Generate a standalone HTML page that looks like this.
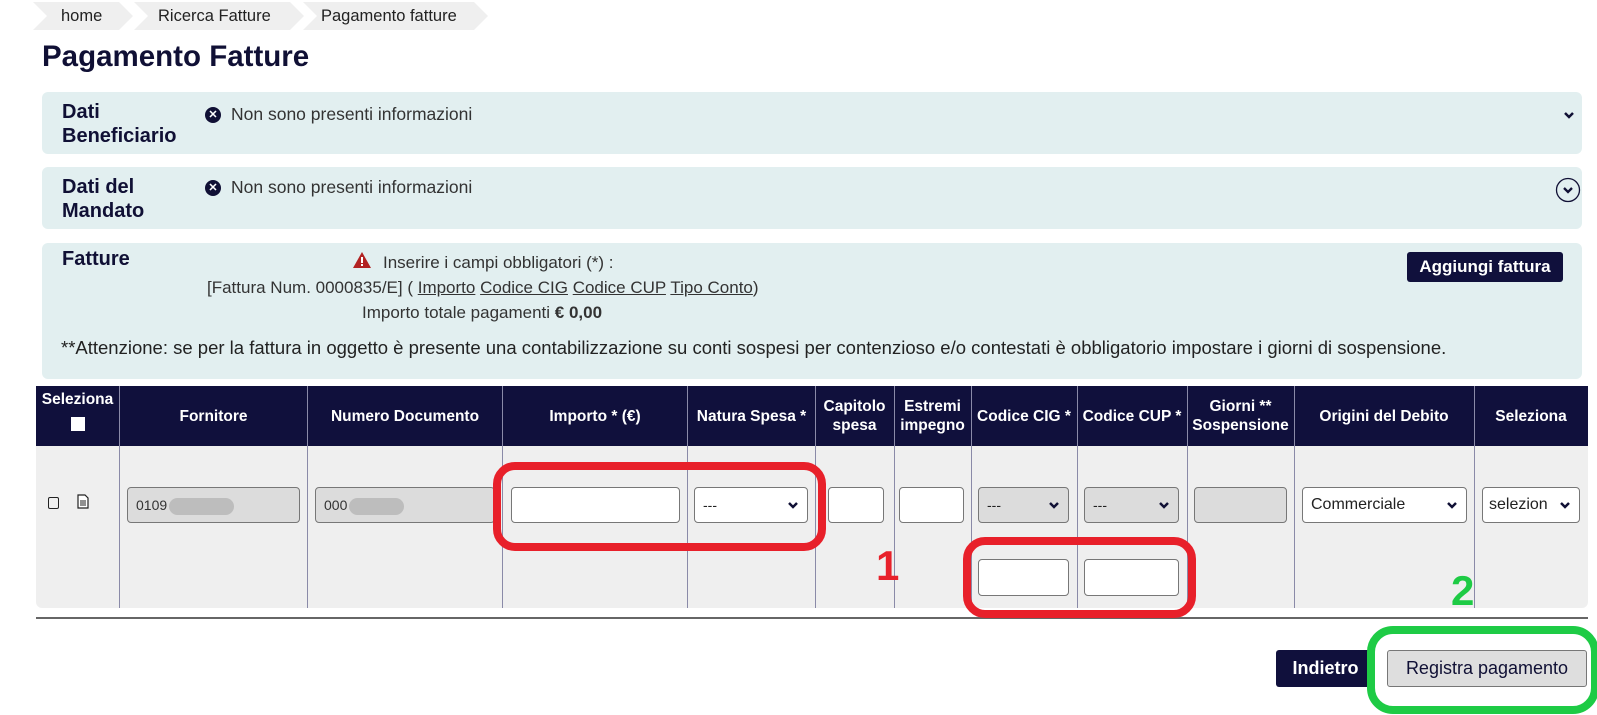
<!DOCTYPE html>
<html><head><meta charset="utf-8"><style>
*{box-sizing:border-box;margin:0;padding:0}
body{width:1597px;height:715px;background:#fff;position:relative;overflow:hidden;font-family:"Liberation Sans",sans-serif;color:#1a1a2e}
.a{position:absolute}
.bc{position:absolute;top:2px;height:28px;background:#efefef;font-size:16.5px;line-height:28px;color:#222;clip-path:polygon(0 0,calc(100% - 14px) 0,100% 50%,calc(100% - 14px) 100%,0 100%,14px 50%)}
.panel{position:absolute;left:42px;width:1540px;background:#e2eff0;border-radius:6px}
.pt{position:absolute;left:20px;font-weight:bold;font-size:20px;line-height:24px;color:#101035}
.info{position:absolute;left:163px;font-size:17.5px;color:#333;display:flex;align-items:center;gap:10px}
.xi{width:16px;height:16px;border-radius:50%;background:#101035;color:#fff;font-size:11px;line-height:16px;text-align:center;font-weight:bold}
.hd{position:absolute;top:386px;height:60px;background:#10103c;color:#fff;font-family:"Liberation Sans Narrow","Liberation Sans",sans-serif;font-weight:bold;font-size:15.5px;line-height:19px;display:flex;align-items:center;justify-content:center;text-align:center}
.vl{position:absolute;top:386px;height:222px;width:1px;background:#8a8aa8}
.in{position:absolute;background:#fff;border:1px solid #777;border-radius:4px;height:36px}
.dis{background:#dcdcdc}
.sel{font-size:14px;line-height:34px;padding-left:8px;color:#222}
.chev{position:absolute;right:7px;top:10px;width:14px;height:14px}
</style></head><body>
<div class="bc" style="left:33px;width:100px;padding-left:28px">home</div>
<div class="bc" style="left:134px;width:170px;padding-left:24px">Ricerca Fatture</div>
<div class="bc" style="left:303px;width:185px;padding-left:18px">Pagamento fatture</div>
<div class="a" style="left:42px;top:40px;font-size:29.5px;font-weight:bold;color:#101035">Pagamento Fatture</div>

<div class="panel" style="top:92px;height:62px">
<div class="pt" style="top:8px">Dati<br>Beneficiario</div>
<div class="info" style="top:12px"><span class="xi">✕</span>Non sono presenti informazioni</div>
<svg class="a" style="left:1521px;top:18px" width="12" height="10" viewBox="0 0 12 10"><path d="M2 3l4 4 4-4" stroke="#101035" stroke-width="2.5" fill="none"/></svg>
</div>
<div class="panel" style="top:167px;height:62px">
<div class="pt" style="top:8px">Dati del<br>Mandato</div>
<div class="info" style="top:10px"><span class="xi">✕</span>Non sono presenti informazioni</div>
<svg class="a" style="left:1513px;top:10px" width="26" height="26" viewBox="0 0 26 26"><circle cx="13" cy="13" r="11.5" stroke="#101035" stroke-width="1.3" fill="none"/><path d="M9 11l4 4 4-4" stroke="#101035" stroke-width="2.3" fill="none"/></svg>
</div>
<div class="panel" style="top:243px;height:136px;font-size:17px;color:#333">
<div class="pt" style="top:4px">Fatture</div>
<svg class="a" style="left:310px;top:8px" width="20" height="18" viewBox="0 0 20 18"><path d="M10 1L19 17H1Z" fill="#b22222"/><rect x="9" y="6" width="2" height="6" fill="#fff"/><rect x="9" y="13" width="2" height="2" fill="#fff"/></svg>
<div class="a" style="left:341px;top:10px">Inserire i campi obbligatori (*) :</div>
<div class="a" style="left:165px;top:35px">[Fattura Num. 0000835/E] ( <u>Importo</u> <u>Codice CIG</u> <u>Codice CUP</u> <u>Tipo Conto</u>)</div>
<div class="a" style="left:320px;top:60px">Importo totale pagamenti <b>€ 0,00</b></div>
<div class="a" style="left:19px;top:94px;font-size:18.5px;color:#222">**Attenzione: se per la fattura in oggetto è presente una contabilizzazione su conti sospesi per contenzioso e/o contestati è obbligatorio impostare i giorni di sospensione.</div>
<div class="a" style="left:1365px;top:9px;width:156px;height:30px;background:#10103c;color:#fff;border-radius:3px;font-weight:bold;font-size:17px;line-height:30px;text-align:center">Aggiungi fattura</div>
</div>

<div class="a" style="left:36px;top:386px;width:1552px;height:222px;background:#efefef;border-radius:6px;overflow:hidden">
<div class="a" style="left:0;top:0;width:1552px;height:60px;background:#10103c"></div>
</div>
<div class="hd" style="left:36px;width:83px;flex-direction:column;justify-content:flex-start;padding-top:4px">Seleziona<span style="display:block;width:14px;height:14px;background:#fff;margin-top:8px"></span></div>
<div class="hd" style="left:119px;width:189px">Fornitore</div>
<div class="hd" style="left:308px;width:194px">Numero Documento</div>
<div class="hd" style="left:502px;width:186px">Importo * (€)</div>
<div class="hd" style="left:688px;width:127px">Natura Spesa *</div>
<div class="hd" style="left:815px;width:79px">Capitolo<br>spesa</div>
<div class="hd" style="left:894px;width:77px">Estremi<br>impegno</div>
<div class="hd" style="left:971px;width:106px">Codice CIG *</div>
<div class="hd" style="left:1077px;width:110px">Codice CUP *</div>
<div class="hd" style="left:1187px;width:107px">Giorni **<br>Sospensione</div>
<div class="hd" style="left:1294px;width:180px">Origini del Debito</div>
<div class="hd" style="left:1474px;width:114px">Seleziona</div>
<div class="vl" style="left:119px"></div><div class="vl" style="left:307px"></div><div class="vl" style="left:502px"></div><div class="vl" style="left:687px"></div><div class="vl" style="left:815px"></div><div class="vl" style="left:894px"></div><div class="vl" style="left:971px"></div><div class="vl" style="left:1077px"></div><div class="vl" style="left:1187px"></div><div class="vl" style="left:1294px"></div><div class="vl" style="left:1474px"></div>

<div class="a" style="left:48px;top:497px;width:11px;height:12px;border:1.5px solid #222;border-radius:2px"></div>
<svg class="a" style="left:77px;top:494px" width="12" height="15" viewBox="0 0 12 15"><path d="M1 1h7l3 3v10H1z" fill="#fff" stroke="#222" stroke-width="1.2"/><path d="M3 7h6M3 9h6M3 11h6" stroke="#222"/></svg>

<div class="in dis sel" style="left:127px;top:487px;width:173px;color:#333">0109<span style="display:inline-block;width:65px;height:17px;border-radius:9px;background:#bdbdbd;vertical-align:middle;margin-left:2px"></span></div>
<div class="in dis sel" style="left:315px;top:487px;width:180px;color:#333">000<span style="display:inline-block;width:55px;height:17px;border-radius:9px;background:#bdbdbd;vertical-align:middle;margin-left:2px"></span></div>
<div class="in" style="left:511px;top:487px;width:169px"></div>
<div class="in sel" style="left:694px;top:487px;width:114px">---<svg class="chev" viewBox="0 0 14 14"><path d="M3 5l4 4 4-4" stroke="#101035" stroke-width="2.5" fill="none"/></svg></div>
<div class="in" style="left:828px;top:487px;width:56px"></div>
<div class="in" style="left:899px;top:487px;width:65px"></div>
<div class="in dis sel" style="left:978px;top:487px;width:91px">---<svg class="chev" viewBox="0 0 14 14"><path d="M3 5l4 4 4-4" stroke="#101035" stroke-width="2.5" fill="none"/></svg></div>
<div class="in dis sel" style="left:1084px;top:487px;width:95px">---<svg class="chev" viewBox="0 0 14 14"><path d="M3 5l4 4 4-4" stroke="#101035" stroke-width="2.5" fill="none"/></svg></div>
<div class="in dis" style="left:1194px;top:487px;width:93px"></div>
<div class="in sel" style="left:1302px;top:487px;width:165px;font-size:16px">Commerciale<svg class="chev" viewBox="0 0 14 14"><path d="M3 5l4 4 4-4" stroke="#101035" stroke-width="2.5" fill="none"/></svg></div>
<div class="in sel" style="left:1482px;top:487px;width:98px;font-size:16px;padding-left:6px">selezion<svg class="chev" viewBox="0 0 14 14"><path d="M3 5l4 4 4-4" stroke="#101035" stroke-width="2.5" fill="none"/></svg></div>
<div class="in" style="left:978px;top:559px;width:91px;height:37px"></div>
<div class="in" style="left:1084px;top:559px;width:95px;height:37px"></div>

<div class="a" style="left:36px;top:617px;width:1552px;height:2px;background:#666"></div>

<div class="a" style="left:1276px;top:650px;width:99px;height:37px;background:#10103c;color:#fff;border-radius:3px;font-weight:bold;font-size:18px;line-height:37px;text-align:center">Indietro</div>
<div class="a" style="left:1387px;top:650px;width:200px;height:37px;background:#dedede;border:1px solid #777;border-radius:3px;font-size:18px;line-height:35px;text-align:center;color:#101035">Registra pagamento</div>

<div class="a" style="left:493px;top:462px;width:333px;height:89px;border:8px solid #e8202a;border-radius:22px"></div>
<div class="a" style="left:963px;top:537px;width:233px;height:81px;border:8px solid #e8202a;border-radius:22px"></div>
<div class="a" style="left:876px;top:541px;font-size:42px;font-weight:bold;color:#e8202a;line-height:50px">1</div>
<div class="a" style="left:1367px;top:626px;width:232px;height:88px;border:8px solid #1ecb45;border-radius:26px"></div>
<div class="a" style="left:1451px;top:566px;font-size:42px;font-weight:bold;color:#1ecb45;line-height:50px">2</div>
</body></html>
